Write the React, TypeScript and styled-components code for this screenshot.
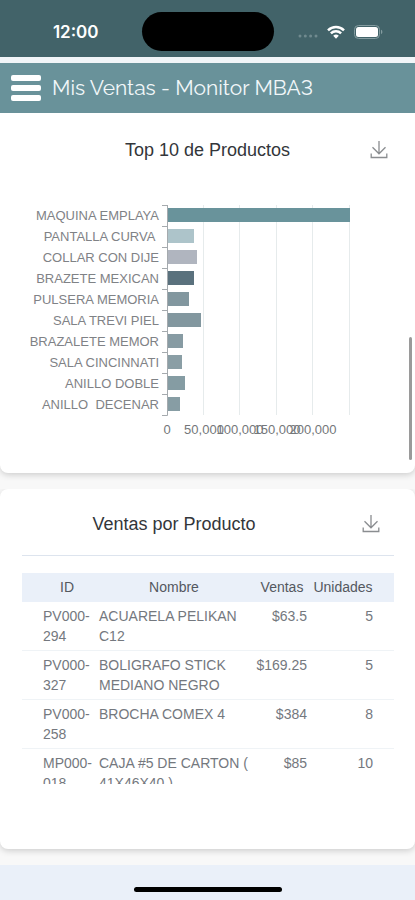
import React from 'react';
import styled, { createGlobalStyle } from 'styled-components';

const GlobalStyle = createGlobalStyle`
  *, *::before, *::after { box-sizing: border-box; }
  body {
    margin: 0;
    background: #f8f8f8;
    font-family: 'Liberation Sans', Arial, sans-serif;
    color: #33363a;
  }
`;

const Page = styled.div`
  display: flex;
  flex-direction: column;
  min-height: 100vh;
`;

const StatusBar = styled.div`
  display: grid;
  grid-template-columns: 1fr auto 1fr;
  align-items: center;
  padding: 12px 0 6px;
  background: #426369;
  color: #fff;
`;

const Clock = styled.time`
  padding-left: 10px;
  text-align: center;
  font: 600 17px/20px Inter, sans-serif;
`;

const Island = styled.div`
  width: 132px;
  height: 39px;
  border-radius: 20px;
  background: #000;
`;

const StatusIcons = styled.div`
  display: flex;
  align-items: center;
  gap: 9px;
  padding-left: 24px;
`;

const AppBar = styled.header`
  display: flex;
  align-items: center;
  gap: 11px;
  height: 56px;
  padding: 0 11px;
  border-top: 6px solid #f1f5f8;
  background: #69929a;
  color: #fff;
`;

const MenuButton = styled.button`
  display: flex;
  flex-direction: column;
  gap: 4px;
  width: 30px;
  padding: 0;
  border: 0;
  background: none;
  cursor: pointer;
`;

const MenuLine = styled.span`
  height: 6px;
  border-radius: 2px;
  background: #fff;
`;

const AppTitle = styled.h1`
  margin: 0;
  font: 400 21px/28px Raleway, Lato, sans-serif;
  font-variant-numeric: lining-nums;
  white-space: nowrap;
  color: #f1f7f9;
`;

const Content = styled.main`
  position: relative;
  display: flex;
  flex-direction: column;
  gap: 16px;
  padding-bottom: 16px;
`;

const Card = styled.section<{ $flatTop?: boolean }>`
  border-radius: ${(p) => (p.$flatTop ? '0 0 8px 8px' : '8px')};
  background: #fff;
  box-shadow: 0 2px 6px rgba(0, 0, 0, 0.17);
  clip-path: inset(0 0 -12px 0);
`;

const ChartHeader = styled.div`
  display: grid;
  grid-template-columns: 1fr auto 1fr;
  align-items: center;
  height: 74px;
  padding: 0 27px;
`;

const TableHeader = styled.div`
  display: flex;
  align-items: center;
  height: 67px;
  margin: 0 21px 17px 22px;
  padding: 4px 14px 0 0;
  border-bottom: 1px solid #dde4ee;
`;

const CardTitle = styled.h2<{ $grow?: boolean }>`
  flex: ${(p) => (p.$grow ? 1 : 'none')};
  grid-column: 2;
  margin: 0;
  padding-right: ${(p) => (p.$grow ? '36px' : '0')};
  text-align: center;
  font-size: 18px;
  font-weight: 400;
  line-height: 24px;
`;

const IconButton = styled.button`
  display: block;
  justify-self: end;
  padding: 2px 0 0;
  border: 0;
  background: none;
  color: #8a8d90;
  cursor: pointer;
`;

const ChartSvg = styled.svg`
  display: block;
  width: 100%;
  height: auto;
  margin-bottom: 28px;
  font-family: 'Liberation Sans', Arial, sans-serif;
  font-size: 13px;
`;

const TableScroll = styled.div`
  height: 211px;
  margin: 0 21px 0 22px;
  overflow-y: auto;
  scrollbar-width: none;
`;

const TableCard = styled(Card)`
  padding-bottom: 65px;
`;

const Table = styled.table`
  width: 100%;
  table-layout: fixed;
  border-collapse: collapse;
  font-size: 14px;
  line-height: 20px;
`;

const Col = styled.col<{ $width?: number }>`
  width: ${(p) => (p.$width ? `${p.$width}px` : 'auto')};
`;

const HeadCell = styled.th`
  padding: 4px 4px 5px;
  background: #eaf0f9;
  color: #54585f;
  font-weight: 400;
  text-align: center;
  &:first-child { padding-left: 21px; }
  &:last-child { padding: 4px 21px 5px 2px; }
`;

const Cell = styled.td<{ $number?: boolean }>`
  padding: 4px;
  border-bottom: 1px solid #eff3f6;
  color: #74787e;
  text-align: ${(p) => (p.$number ? 'right' : 'left')};
  vertical-align: top;
  &:first-child { padding-left: 21px; }
  &:nth-child(3) { padding-left: 2px; }
  &:last-child { padding-right: 21px; }
`;

const ScrollThumb = styled.div`
  position: absolute;
  top: 224px;
  right: 3px;
  width: 3px;
  height: 123px;
  border-radius: 2px;
  background: #9a9a9a;
`;

const BottomArea = styled.footer`
  display: flex;
  flex: 1;
  justify-content: center;
  align-items: flex-end;
  min-height: 35px;
  padding-bottom: 8px;
  background: #eaf0f9;
`;

const HomeIndicator = styled.div`
  width: 148px;
  height: 5px;
  border-radius: 3px;
  background: #000;
`;

const bars = [
  { label: 'MAQUINA EMPLAYA', value: 250000, color: '#69939b' },
  { label: 'PANTALLA CURVA\u00a0', value: 36300, color: '#adc4ca' },
  { label: 'COLLAR CON DIJE', value: 40400, color: '#b0b5bf' },
  { label: 'BRAZETE MEXICAN', value: 37000, color: '#5a717d' },
  { label: 'PULSERA MEMORIA', value: 30000, color: '#82979f' },
  { label: 'SALA TREVI PIEL', value: 46500, color: '#82979f' },
  { label: 'BRAZALETE MEMOR', value: 22000, color: '#879ba3' },
  { label: 'SALA CINCINNATI', value: 21000, color: '#8a9ea5' },
  { label: 'ANILLO DOBLE', value: 24700, color: '#859ca3' },
  { label: 'ANILLO\u00a0 DECENAR', value: 17800, color: '#879da4' },
];

const products = [
  { id: 'PV000-294', name: 'ACUARELA PELIKAN C12', sales: '$63.5', units: 5 },
  { id: 'PV000-327', name: 'BOLIGRAFO STICK MEDIANO NEGRO', sales: '$169.25', units: 5 },
  { id: 'PV000-258', name: 'BROCHA COMEX 4', sales: '$384', units: 8 },
  { id: 'MP000-018', name: 'CAJA #5 DE CARTON ( 41X46X40 )', sales: '$85', units: 10 },
];

const AXIS_X = 167;
const PLOT_WIDTH = 183;
const PLOT_TOP = 18;
const ROW = 21;
const MAX = 250000;
const PLOT_BOTTOM = PLOT_TOP + ROW * bars.length;
const scale = (v: number) => Math.round((v / MAX) * PLOT_WIDTH);

function DownloadIcon() {
  return (
    <svg width="18" height="19" viewBox="0 0 18 19" fill="none" stroke="currentColor" strokeWidth="1.3" aria-hidden="true">
      <path d="M9 1v13M2.5 7.3 9 13.8l6.5-6.5M1.2 13.5v4h15.6v-4" />
    </svg>
  );
}

function SystemIcons() {
  return (
    <StatusIcons>
      <svg width="20" height="16" viewBox="0 0 20 16" fill="#708a8f" aria-hidden="true">
        <circle cx="2" cy="12" r="1.5" />
        <circle cx="7.3" cy="12" r="1.5" />
        <circle cx="12.6" cy="12" r="1.5" />
        <circle cx="18" cy="12" r="1.5" />
      </svg>
      <svg width="18" height="14" viewBox="0 0 18 14" fill="none" stroke="#fff" strokeWidth="2.5" aria-hidden="true">
        <path d="M1 5.3a11.5 11.5 0 0 1 16 0M3.9 8.4a7.2 7.2 0 0 1 10.2 0" />
        <path d="M9 13.8 6.2 10.8a4 4 0 0 1 5.6 0Z" fill="#fff" stroke="none" />
      </svg>
      <svg width="29" height="14" viewBox="0 0 29 14" aria-hidden="true">
        <rect x=".5" y=".5" width="25" height="13" rx="4" fill="none" stroke="#849ca0" />
        <rect x="2" y="2" width="22" height="10" rx="2.5" fill="#fff" />
        <path d="M27 4.8c1.8.6 1.8 3.8 0 4.4Z" fill="#849ca0" />
      </svg>
    </StatusIcons>
  );
}

function ProductChart() {
  const steps = [0, 50000, 100000, 150000, 200000, 250000];
  return (
    <ChartSvg viewBox="0 0 415 258" role="img" aria-label="Top 10 de Productos">
      {steps.slice(1).map((s) => (
        <line
          key={s}
          x1={AXIS_X + scale(s) - 0.5}
          x2={AXIS_X + scale(s) - 0.5}
          y1={PLOT_TOP}
          y2={PLOT_BOTTOM}
          stroke="#e6ebec"
        />
      ))}
      {bars.map((b, i) => (
        <g key={b.label}>
          <text x="159" y={PLOT_TOP + ROW * i + 15} textAnchor="end" fill="#7f8286">
            {b.label}
          </text>
          <rect x={AXIS_X} y={PLOT_TOP + ROW * i + 3} width={scale(b.value)} height="14" fill={b.color} />
          <path d={`M162 ${PLOT_TOP + ROW * i + 0.5}h6`} stroke="#a5aaae" />
        </g>
      ))}
      <path d={`M162 ${PLOT_BOTTOM + 0.5}h5.5V${PLOT_TOP}`} fill="none" stroke="#a5aaae" />
      {steps.slice(0, 5).map((s) => (
        <text key={s} x={AXIS_X + scale(s)} y={PLOT_BOTTOM + 19} textAnchor="middle" fill="#74777a">
          {s.toLocaleString('en-US')}
        </text>
      ))}
    </ChartSvg>
  );
}

export default function App() {
  return (
    <>
      <GlobalStyle />
      <Page>
        <StatusBar>
          <Clock>12:00</Clock>
          <Island />
          <SystemIcons />
        </StatusBar>
        <AppBar>
          <MenuButton aria-label="Menú">
            <MenuLine />
            <MenuLine />
            <MenuLine />
          </MenuButton>
          <AppTitle>Mis Ventas - Monitor MBA3</AppTitle>
        </AppBar>
        <Content>
          <Card $flatTop>
            <ChartHeader>
              <CardTitle>Top 10 de Productos</CardTitle>
              <IconButton aria-label="Descargar Top 10 de Productos">
                <DownloadIcon />
              </IconButton>
            </ChartHeader>
            <ProductChart />
          </Card>
          <TableCard>
            <TableHeader>
              <CardTitle $grow>Ventas por Producto</CardTitle>
              <IconButton aria-label="Descargar Ventas por Producto">
                <DownloadIcon />
              </IconButton>
            </TableHeader>
            <TableScroll>
              <Table>
                <colgroup>
                  <Col $width={73} />
                  <Col />
                  <Col $width={58} />
                  <Col $width={83} />
                </colgroup>
                <thead>
                  <tr>
                    <HeadCell scope="col">ID</HeadCell>
                    <HeadCell scope="col">Nombre</HeadCell>
                    <HeadCell scope="col">Ventas</HeadCell>
                    <HeadCell scope="col">Unidades</HeadCell>
                  </tr>
                </thead>
                <tbody>
                  {products.map((p) => (
                    <tr key={p.id}>
                      <Cell>{p.id}</Cell>
                      <Cell>{p.name}</Cell>
                      <Cell $number>{p.sales}</Cell>
                      <Cell $number>{p.units}</Cell>
                    </tr>
                  ))}
                </tbody>
              </Table>
            </TableScroll>
          </TableCard>
          <ScrollThumb />
        </Content>
        <BottomArea>
          <HomeIndicator />
        </BottomArea>
      </Page>
    </>
  );
}
